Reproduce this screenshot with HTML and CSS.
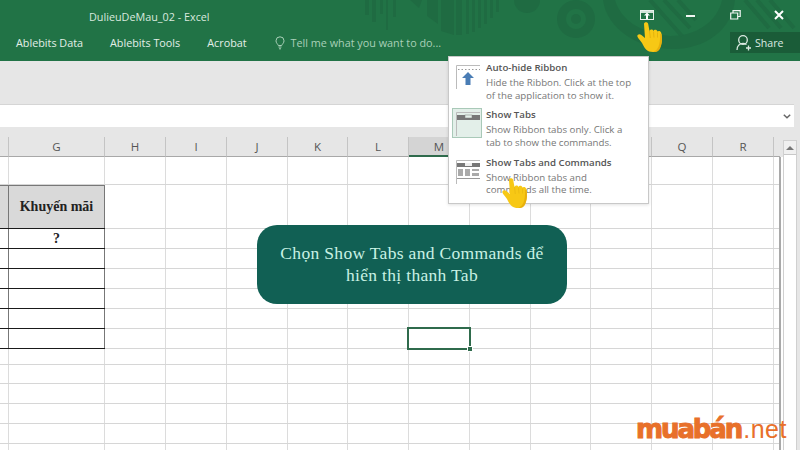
FILE: index.html
```html
<!DOCTYPE html>
<html lang="vi">
<head>
<meta charset="utf-8">
<title>DulieuDeMau_02 - Excel</title>
<link rel="stylesheet" href="styles.css">
</head>
<body>
<div class="app">
  <header class="titlebar">
    <svg class="decor" viewBox="0 0 800 61" width="800" height="61" aria-hidden="true">
      <g fill="#1f6b42">
        <rect x="365" y="0" width="4" height="15"/><rect x="372" y="0" width="4" height="22"/><rect x="380" y="0" width="3" height="14"/><rect x="386" y="0" width="2" height="30"/><rect x="393" y="0" width="3" height="17"/>
        <path d="M410 0h12l-3 8zM427 0h11v24l-11-8zM441 0h13v35l-13-4z"/>
        <rect x="456" y="0" width="6" height="35"/><rect x="466" y="0" width="3" height="34"/><rect x="472" y="0" width="3" height="32"/><rect x="478" y="0" width="3" height="28"/><rect x="484" y="0" width="3" height="24"/><rect x="490" y="0" width="3" height="18"/><rect x="496" y="0" width="3" height="12"/>
        <circle cx="527" cy="0" r="13"/>
        <path fill-rule="evenodd" d="M576 0a19 19 0 1 0 .01 0zM576 9a10 10 0 1 1-.01 0z"/>
        <circle cx="576" cy="19" r="5"/>
        <path d="M603 0h132c-3 30-30 49-62 49-35 0-66-20-70-49z"/>
      </g>
      <path d="M615 0c6 20 25 33 55 36 28 0 48-16 52-36z" fill="#217346"/>
      <g stroke="#1f6b42" stroke-width="4" fill="none"><path d="M650 0l32 36M664 0l26 28M678 0l18 20M745 0l24 28M757 0l24 28M770 0l24 28"/></g>
    </svg>
    <div class="title-row">
      <span class="doc-title">DulieuDeMau_02 - Excel</span>
      <div class="win-buttons">
        <svg class="win-icon display-icon" viewBox="0 0 14 10" width="14" height="10" aria-hidden="true"><rect x=".5" y=".5" width="13" height="9" fill="none" stroke="#e8f1ec"/><rect x="1" y="1" width="12" height="2" fill="#cfe3d7"/><path d="M7 2.5l3 3H8v3.5H6V5.5H4z" fill="#fff"/></svg>
        <svg class="win-icon min-icon" viewBox="0 0 10 10" width="10" height="10" aria-hidden="true"><rect x="0" y="4" width="9" height="2" fill="#f1f6f3"/></svg>
        <svg class="win-icon restore-icon" viewBox="0 0 11 10" width="11" height="10" aria-hidden="true"><path d="M.7 3h7v6h-7zM3 3V.7h7.2v5.8H8" fill="none" stroke="#f1f6f3" stroke-width="1.2"/></svg>
        <svg class="win-icon close-icon" viewBox="0 0 10 10" width="10" height="10" aria-hidden="true"><path d="M1 1l8 8M9 1l-8 8" stroke="#fff" stroke-width="2"/></svg>
      </div>
    </div>
    <div class="tab-row">
      <nav class="tabs">
        <span class="tab">Ablebits Data</span>
        <span class="tab">Ablebits Tools</span>
        <span class="tab">Acrobat</span>
      </nav>
      <div class="tell-me">
        <svg viewBox="0 0 10 14" width="10" height="14" aria-hidden="true"><path d="M3.3 9.500C2.800 8 1 7 1 4.800a4 4 0 0 1 8 0C9 7 7.200 8 6.700 9.500zM3.500 11h3M4 12.800h2" fill="none" stroke="#a9d0b8"/></svg>
        <span>Tell me what you want to do...</span>
      </div>
      <div class="share">
        <svg viewBox="0 0 16 18" width="16" height="18" aria-hidden="true"><circle cx="7" cy="6" r="4.300" fill="none" stroke="#dbe9e1" stroke-width="1.300"/><path d="M1 16c0-4 2.500-6.500 6-6.500 1.500 0 2.500.4 3.500 1M12.500 11.500v5M10 14h5" fill="none" stroke="#dbe9e1" stroke-width="1.300"/></svg>
        <span>Share</span>
      </div>
    </div>
  </header>

  <div class="ribbon"></div>

  <div class="formula-band">
    <div class="formula-bar">
      <svg viewBox="0 0 8 5" width="8" height="5" aria-hidden="true"><path d="M.8.8L4 3.800 7.200.8" fill="none" stroke="#666" stroke-width="1.500"/></svg>
    </div>
  </div>

  <div class="lower">
    <div class="main">
      <div class="headers">
        <span class="hd w9"></span><span class="hd w96">G</span><span class="hd w61">H</span><span class="hd w61">I</span><span class="hd w61">J</span><span class="hd w60">K</span><span class="hd w61">L</span><span class="hd w61 selected">M</span><span class="hd w61"></span><span class="hd w60"></span><span class="hd w61"></span><span class="hd w61">Q</span><span class="hd w61">R</span><span class="hd w6"></span>
      </div>
      <div class="sheet">
        <div class="v-lines">
          <i class="vl w9"></i><i class="vl w96"></i><i class="vl w61"></i><i class="vl w61"></i><i class="vl w61"></i><i class="vl w60"></i><i class="vl w61"></i><i class="vl w61"></i><i class="vl w61"></i><i class="vl w60"></i><i class="vl w61"></i><i class="vl w61"></i><i class="vl w61"></i><i class="vl w6"></i>
        </div>
        <div class="h-lines">
          <i class="hl r28"></i><i class="hl r44"></i><i class="hl r20"></i><i class="hl r20"></i><i class="hl r20"></i><i class="hl r20"></i><i class="hl r20"></i><i class="hl r20"></i><i class="hl r16"></i><i class="hl r19"></i><i class="hl r20"></i><i class="hl r20"></i><i class="hl r20"></i>
        </div>
        <div class="data-table">
          <div class="t-row t-head"><span class="t-left"></span><span class="t-cell">Khuyến mãi</span></div>
          <div class="t-row"><span class="t-left"></span><span class="t-cell">?</span></div>
          <div class="t-row"><span class="t-left"></span><span class="t-cell"></span></div>
          <div class="t-row"><span class="t-left"></span><span class="t-cell"></span></div>
          <div class="t-row"><span class="t-left"></span><span class="t-cell"></span></div>
          <div class="t-row"><span class="t-left"></span><span class="t-cell"></span></div>
          <div class="t-row"><span class="t-left"></span><span class="t-cell"></span></div>
        </div>
      </div>
    </div>
    <div class="scrollbar">
      <div class="scroll-up"><svg viewBox="0 0 8 4" width="8" height="4" aria-hidden="true"><path d="M4 0l4 4H0z" fill="#777"/></svg></div>
    </div>
  </div>
</div>

<div class="menu">
  <div class="menu-item">
    <div class="menu-icon">
      <svg viewBox="0 0 24 24" width="24" height="24" aria-hidden="true"><path d="M.5 24V.5H24" fill="none" stroke="#bbb"/><path d="M2 4.500H24" stroke="#999" stroke-dasharray="1.500 2"/><path d="M12 7l6 6h-3.500v7h-5v-7H6z" fill="#4a7db5"/></svg>
    </div>
    <div class="menu-text"><b>Auto-hide Ribbon</b><p>Hide the Ribbon. Click at the top<br>of the application to show it.</p></div>
  </div>
  <div class="menu-item">
    <div class="menu-icon active">
      <svg viewBox="0 0 24 24" width="24" height="24" aria-hidden="true"><path d="M.5 24V.5H24" fill="none" stroke="#bbb"/><rect x="1" y="3" width="23" height="5" fill="#777"/><rect x="9" y="3" width="7" height="3" fill="#e3efe9" stroke="#777" stroke-width=".5"/></svg>
    </div>
    <div class="menu-text"><b>Show Tabs</b><p>Show Ribbon tabs only. Click a<br>tab to show the commands.</p></div>
  </div>
  <div class="menu-item">
    <div class="menu-icon">
      <svg viewBox="0 0 24 24" width="24" height="24" aria-hidden="true"><path d="M.5 24V.5H24" fill="none" stroke="#bbb"/><rect x="1" y="3" width="23" height="4" fill="#777"/><rect x="9" y="3" width="7" height="3" fill="#eee"/><rect x="2" y="9" width="5" height="7" fill="#aaa"/><rect x="9" y="9" width="5" height="7" fill="#aaa"/><rect x="16" y="9" width="7" height="2" fill="#aaa"/><rect x="16" y="13" width="7" height="3" fill="#aaa"/><rect x="1" y="18" width="23" height="1" fill="#999"/></svg>
    </div>
    <div class="menu-text"><b>Show Tabs and Commands</b><p>Show Ribbon tabs and<br>commands all the time.</p></div>
  </div>
</div>

<div class="callout">Chọn Show Tabs and Commands để<br>hiển thị thanh Tab</div>
<div class="selection"><i class="handle"></i></div>

<svg class="hand hand-top" viewBox="0 0 26 30" width="26" height="30" aria-hidden="true"><path d="M7 2c0-2.500 4-2.500 4.200 0l1.300 7c.3-2 3.700-2.200 4 0 .5-1.700 3.500-1.700 4 .5.800-1 3.300-.8 3.800 1.500.8 5 .8 9-.8 13-1.500 4-3 6-7.500 6-6 0-8-3-11-9C3.500 18.500 1 16.500.4 14.500c-.4-2 2-3 4-1.500l3.600 3z" fill="#f7c815"/><path d="M12.500 9l.8 7M16.500 9.500l.5 6M20.500 10.500v5" stroke="#e5b30d" fill="none"/><path d="M24.500 12c.8 5 .8 9-.8 13-1.500 4-3 5-7.500 5 5-2 7-7 7-18z" fill="#e8b00c"/></svg>
<svg class="hand hand-menu" viewBox="0 0 26 30" width="26" height="30" aria-hidden="true"><path d="M7 2c0-2.500 4-2.500 4.200 0l1.300 7c.3-2 3.700-2.200 4 0 .5-1.700 3.500-1.700 4 .5.800-1 3.300-.8 3.800 1.500.8 5 .8 9-.8 13-1.500 4-3 6-7.500 6-6 0-8-3-11-9C3.500 18.500 1 16.500.4 14.500c-.4-2 2-3 4-1.500l3.600 3z" fill="#f7c815"/><path d="M12.500 9l.8 7M16.500 9.500l.5 6M20.500 10.500v5" stroke="#ecbc12" fill="none"/><path d="M24.500 12c.8 5 .8 9-.8 13-1.500 4-3 5-7.500 5 5-2 7-7 7-18z" fill="#e8b00c"/></svg>

<div class="logo"><span class="logo-main">muabán</span><span class="logo-net">.net</span></div>
</body>
</html>
```

FILE: styles.css
```css
* { box-sizing: border-box; }
html, body { margin: 0; padding: 0; }
body {
  width: 800px; height: 450px; overflow: hidden; position: relative;
  background: #fff; font-family: "Open Sans", "Noto Sans", sans-serif; color: #555;
}
.app { display: flex; flex-direction: column; width: 800px; height: 450px; }

.titlebar { position: relative; height: 61px; flex: none; background: #217346; color: #e3efe8; }
.decor { position: absolute; left: 0; top: 0; }
.title-row, .tab-row { position: relative; display: flex; align-items: center; }
.title-row { height: 32px; padding-left: 89px; }
.doc-title { font-size: 10.8px; color: #d9e9df; }
.win-buttons { margin-left: auto; display: flex; align-items: center; }
.win-icon { display: block; flex: none; }
.display-icon { margin-right: 32px; margin-top: -2px; }
.min-icon { margin-right: 34px; margin-top: 0; }
.restore-icon { margin-right: 33px; margin-top: -3px; }
.close-icon { margin-right: 16px; margin-top: -3px; }

.tab-row { height: 21px; padding-left: 16px; }
.tabs { display: flex; gap: 27px; }
.tab { font-size: 10.8px; color: #e3efe8; }
.tell-me { display: flex; align-items: center; gap: 6px; margin-left: 28px; font-size: 10.8px; color: #a9d0b8; }
.share {
  margin-left: auto; width: 70px; height: 21px; background: #1a5c38;
  display: flex; align-items: center; gap: 3px; padding-left: 6px;
  font-size: 10.6px; color: #dbe9e1;
}

.ribbon { height: 43px; flex: none; background: #e6e6e6; }
.formula-band { height: 33px; flex: none; background: #e6e6e6; padding-right: 6px; }
.formula-bar {
  height: 23px; background: #fff; border-top: 1px solid #d5d5d5;
  display: flex; align-items: center; justify-content: flex-end; padding-right: 3px;
}

.lower { flex: 1; display: flex; min-height: 0; background: #e6e6e6; }
.main { width: 783px; flex: none; display: flex; flex-direction: column; background: #fff; }
.headers { display: flex; height: 20px; flex: none; background: #e6e6e6; }
.hd {
  display: flex; align-items: center; justify-content: center; flex: none;
  font-size: 11.5px; color: #555; border-right: 1px solid #c4c4c4; border-bottom: 1px solid #a8a8a8;
}
.hd.selected { background: #d4d4d4; border-bottom: 2px solid #2f6b4c; }
.hd.w6 { border-right: 0; }
.w6 { width: 6px; } .w9 { width: 9px; } .w96 { width: 96px; } .w60 { width: 60px; } .w61 { width: 61px; }

.sheet { flex: 1; min-height: 0; display: grid; width: 781px; overflow: hidden; border-right: 2px solid #a9a9a9; }
.v-lines, .h-lines, .data-table { grid-area: 1 / 1; }
.v-lines { display: flex; }
.vl { display: block; flex: none; border-right: 1px solid #dcdcdc; }
.vl.w6 { border-right: 0; }
.h-lines { display: flex; flex-direction: column; }
.hl { display: block; flex: none; border-bottom: 1px solid #d6d6d6; }
.r16 { height: 16px; } .r19 { height: 19px; } .r20 { height: 20px; } .r28 { height: 28px; } .r44 { height: 44px; }

.data-table { align-self: start; width: 105px; margin-top: 28px; font-family: "Liberation Serif", serif; font-weight: 700; color: #222; }
.t-row { display: flex; height: 20px; border-bottom: 1px solid #1a1a1a; }
.t-head { height: 44px; background: #d9d9d9; border-top: 1px solid #777; }
.t-left { width: 8px; flex: none; }
.t-cell {
  flex: 1; display: flex; align-items: center; justify-content: center;
  border-left: 1px solid #777; border-right: 1px solid #777; font-size: 14px;
}

.scrollbar { width: 14px; flex: none; background: #fff; border: 1px solid #d0d0d0; border-bottom: 0; margin-top: 3px; }
.scroll-up { height: 14px; display: flex; align-items: center; justify-content: center; border-bottom: 1px solid #c8c8c8; background: #f0f0f0; }

.menu {
  position: absolute; left: 448px; top: 56px; width: 201px; height: 148px; padding-top: 4px;
  background: #fff; border: 1px solid #c8c8c8; box-shadow: 0 1px 3px rgba(0,0,0,.12);
  display: flex; flex-direction: column;
}
.menu-item { display: flex; height: 48px; }
.menu-icon {
  width: 30px; height: 30px; margin: 0 0 0 3px; padding: 3px; flex: none; border: 1px solid transparent;
}
.menu-icon.active { background: #e3efe9; border-color: #a9c9b8; }
.menu-icon svg { display: block; }
.menu-text { margin-left: 4px; font-size: 9.7px; line-height: 12.5px; color: #777; }
.menu-text b { display: block; font-weight: 600; color: #555; height: 16px; line-height: 14px; }
.menu-text p { margin: 0; }

.callout {
  position: absolute; left: 257px; top: 225px; width: 310px; height: 79px;
  background: #116054; border-radius: 20px; color: #c9f2e4;
  font-family: "Liberation Serif", serif; font-size: 17.500px; line-height: 22px;
  text-align: center; padding-top: 17px; letter-spacing: .32px;
}
.selection { position: absolute; left: 407px; top: 327px; width: 64px; height: 23px; border: 2px solid #2f6b4c; }
.handle { position: absolute; right: -4px; bottom: -4px; background: #2f6b4c; border: 1px solid #fff; box-sizing: content-box; width: 4px; height: 4px; }

.hand { position: absolute; display: block; }
.hand-top { left: 637px; top: 22px; }
.hand-menu { left: 502px; top: 178px; }

.logo { position: absolute; left: 636px; top: 414px; white-space: nowrap; color: #e8702a; font-family: "DejaVu Sans", sans-serif; }
.logo-main { font-size: 26px; font-weight: 700; letter-spacing: -2.1px; -webkit-text-stroke: 1px #e8702a; }
.logo-net { font-family: "Liberation Sans", sans-serif; font-size: 25px; letter-spacing: .5px; margin-left: 2px; }
```
